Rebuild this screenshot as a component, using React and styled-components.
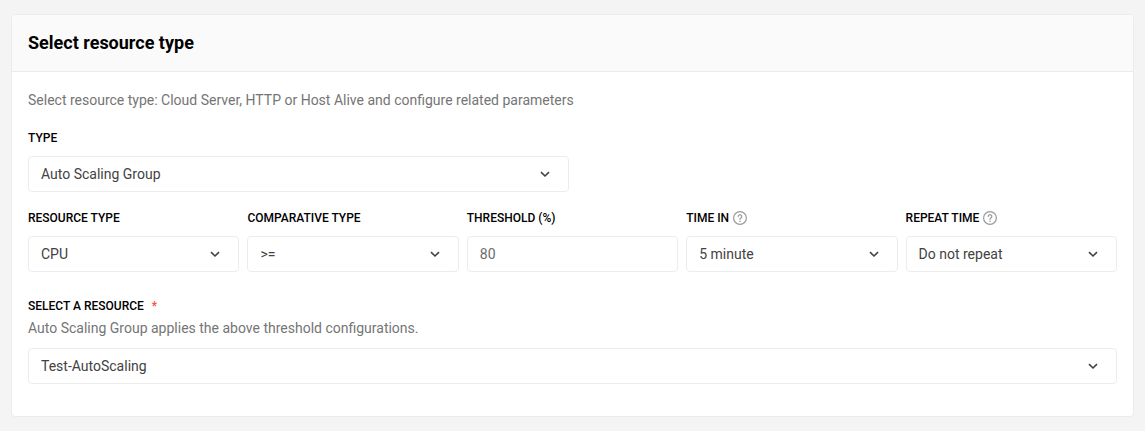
import React from "react";
import styled, { createGlobalStyle } from "styled-components";

const HelpIcon = () => (
  <svg width="14" height="14" viewBox="0 0 14 14" fill="none" aria-hidden="true">
    <circle cx="7" cy="7" r="6.4" stroke="#9b9b9b" strokeWidth="1.2" />
    <path
      d="M5.2 5.5a1.8 1.8 0 1 1 2.7 1.6c-.6.3-.9.6-.9 1.2"
      stroke="#9b9b9b"
      strokeWidth="1.2"
      strokeLinecap="round"
    />
    <circle cx="7" cy="10.3" r="0.8" fill="#9b9b9b" />
  </svg>
);

const SelectField = ({ id, options }) => (
  <SelectWrapper>
    <Select id={id}>
      {options.map((option) => (
        <option key={option}>{option}</option>
      ))}
    </Select>
    <Chevron viewBox="0 0 10 10" aria-hidden="true">
      <path d="M1 3.1L5 7l4-3.9" />
    </Chevron>
  </SelectWrapper>
);

const App = () => {
  return (
    <Page>
      <GlobalStyle />
      <Card>
        <CardHeader>
          <CardTitle>Select resource type</CardTitle>
        </CardHeader>
        <CardBody>
          <Description>
            Select resource type: Cloud Server, HTTP or Host Alive and configure
            related parameters
          </Description>
          <TypeField>
            <Label htmlFor="type">TYPE</Label>
            <SelectField id="type" options={["Auto Scaling Group", "Cloud Server", "HTTP", "Host Alive"]} />
          </TypeField>
          <FieldGrid>
            <Field>
              <Label htmlFor="resourceType">RESOURCE TYPE</Label>
              <SelectField id="resourceType" options={["CPU", "RAM"]} />
            </Field>
            <Field>
              <Label htmlFor="comparativeType">COMPARATIVE TYPE</Label>
              <SelectField id="comparativeType" options={[">=", "<="]} />
            </Field>
            <Field>
              <Label htmlFor="threshold">THRESHOLD (%)</Label>
              <Input id="threshold" defaultValue="80" />
            </Field>
            <Field>
              <Label htmlFor="timeIn">
                TIME IN <HelpIcon />
              </Label>
              <SelectField id="timeIn" options={["5 minute", "10 minute"]} />
            </Field>
            <Field>
              <Label htmlFor="repeatTime">
                REPEAT TIME <HelpIcon />
              </Label>
              <SelectField id="repeatTime" options={["Do not repeat", "5 minute"]} />
            </Field>
          </FieldGrid>
          <ResourceField>
            <ResourceLabel htmlFor="resource">
              SELECT A RESOURCE <Required>*</Required>
            </ResourceLabel>
            <Hint>Auto Scaling Group applies the above threshold configurations.</Hint>
            <SelectField id="resource" options={["Test-AutoScaling"]} />
          </ResourceField>
        </CardBody>
      </Card>
    </Page>
  );
};

const GlobalStyle = createGlobalStyle`
  * {
    box-sizing: border-box;
  }
  body {
    margin: 0;
    background-color: #f4f4f4;
    color: #424242;
    font-family: Roboto, "Liberation Sans", sans-serif;
    font-size: 14px;
  }
`;

const Page = styled.main`
  padding: 14px 11px;
`;

const Card = styled.section`
  border: 1px solid #ececec;
  border-radius: 4px;
  background-color: #fff;
  overflow: hidden;
`;

const CardHeader = styled.header`
  padding: 16px;
  border-bottom: 1px solid #ececec;
  background-color: #fafafa;
`;

const CardTitle = styled.h2`
  margin: 0;
  color: #000;
  font-size: 18px;
  font-weight: 700;
  line-height: 24px;
`;

const CardBody = styled.div`
  padding: 18px 16px 32px;
`;

const Description = styled.p`
  margin: 0;
  color: #757575;
  line-height: 20px;
`;

const Field = styled.div`
  min-width: 0;
`;

const TypeField = styled(Field)`
  width: calc(50% - 4px);
  margin-top: 18px;
`;

const FieldGrid = styled.div`
  display: grid;
  grid-template-columns: repeat(5, minmax(0, 1fr));
  gap: 8px;
  margin-top: 16px;
`;

const ResourceField = styled(Field)`
  margin-top: 24px;
`;

const Label = styled.label`
  display: flex;
  align-items: center;
  gap: 4px;
  margin-bottom: 8px;
  color: #000;
  font-size: 12px;
  font-weight: 500;
  line-height: 20px;
`;

const ResourceLabel = styled(Label)`
  gap: 8px;
  margin-bottom: 0;
`;

const Required = styled.span`
  color: #ff4d2e;
`;

const Hint = styled.p`
  margin: 2px 0 10px;
  color: #757575;
  line-height: 20px;
`;

const SelectWrapper = styled.div`
  position: relative;
`;

const Input = styled.input`
  display: block;
  width: 100%;
  height: 36px;
  padding: 0 12px;
  border: 1px solid #ececec;
  border-radius: 4px;
  outline: none;
  background-color: #fff;
  color: #6b6b6b;
  font: inherit;
`;

const Select = styled(Input).attrs({ as: "select" })`
  padding-right: 32px;
  appearance: none;
  color: #424242;
  cursor: pointer;
`;

const Chevron = styled.svg`
  position: absolute;
  top: 13px;
  right: 19px;
  width: 10px;
  height: 10px;
  fill: none;
  stroke: #424242;
  stroke-width: 1.6;
  pointer-events: none;
`;

export default App;
